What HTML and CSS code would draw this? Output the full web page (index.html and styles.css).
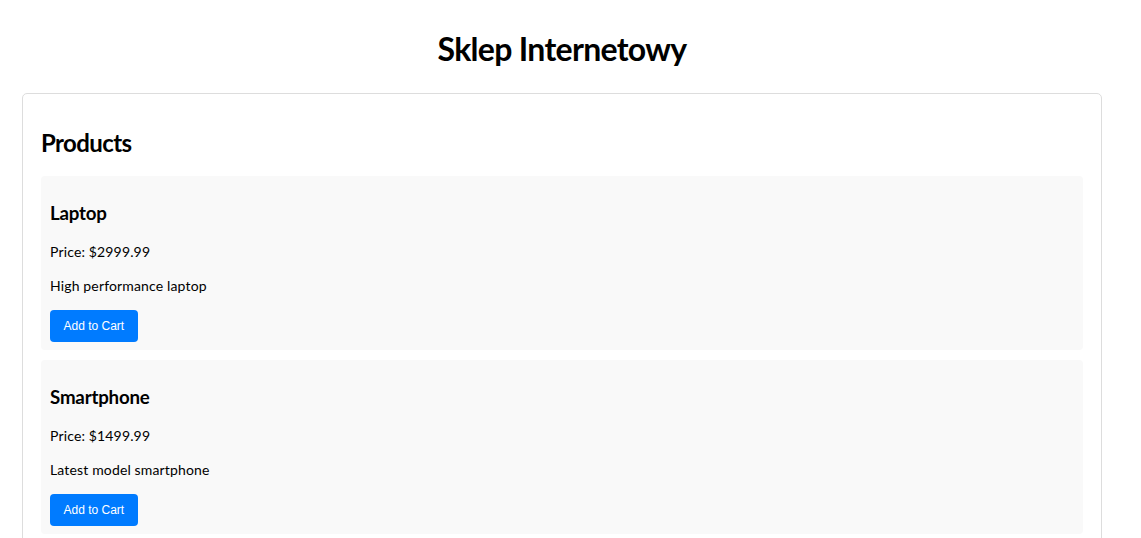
FILE: index.html
```html
<!DOCTYPE html>
<html lang="pl">
<head>
<meta charset="utf-8">
<title>Sklep Internetowy</title>
<link rel="stylesheet" href="styles.css">
</head>
<body>
  <div class="page">
    <h1 class="title">Sklep Internetowy</h1>
    <section class="panel">
      <h2 class="panel-title">Products</h2>
      <div class="product">
        <h3 class="product-name">Laptop</h3>
        <p class="product-text">Price: $2999.99</p>
        <p class="product-text">High performance laptop</p>
        <button class="btn-add" type="button">Add to Cart</button>
      </div>
      <div class="product">
        <h3 class="product-name">Smartphone</h3>
        <p class="product-text">Price: $1499.99</p>
        <p class="product-text">Latest model smartphone</p>
        <button class="btn-add" type="button">Add to Cart</button>
      </div>
    </section>
  </div>
</body>
</html>
```

FILE: styles.css
```css
html, body {
  margin: 0;
  padding: 0;
  background: #ffffff;
}

body {
  font-family: Lato, "Open Sans", "Noto Sans", sans-serif;
  color: #000000;
  margin-right: 17px;
}

.page {
  padding: 0 22px;
}

.title {
  font-size: 32px;
  font-weight: 700;
  line-height: 40px;
  letter-spacing: -0.7px;
  text-align: center;
  margin: 29px 0 24px;
}

.panel {
  border: 1px solid #dddddd;
  border-radius: 5px;
  padding: 18px 18px 40px;
}

.panel-title {
  font-size: 24px;
  font-weight: 700;
  line-height: 30px;
  letter-spacing: -0.6px;
  margin: 16px 0 18px;
}

.product {
  background: #f9f9f9;
  border-radius: 4px;
  padding: 10px 10px 8px 9px;
  margin-bottom: 10px;
}

.product-name {
  font-size: 18.72px;
  font-weight: 700;
  line-height: 24px;
  letter-spacing: -0.2px;
  margin: 15px 0 17px;
}

.product-text {
  font-size: 14px;
  line-height: 20px;
  letter-spacing: 0.15px;
  margin: 0 0 14px;
}

.btn-add {
  display: block;
  font-family: "Liberation Sans", Arial, sans-serif;
  font-size: 12px;
  line-height: 14px;
  padding: 9px 13.5px;
  color: #ffffff;
  background: #007bff;
  border: none;
  border-radius: 4px;
  cursor: pointer;
}
```
